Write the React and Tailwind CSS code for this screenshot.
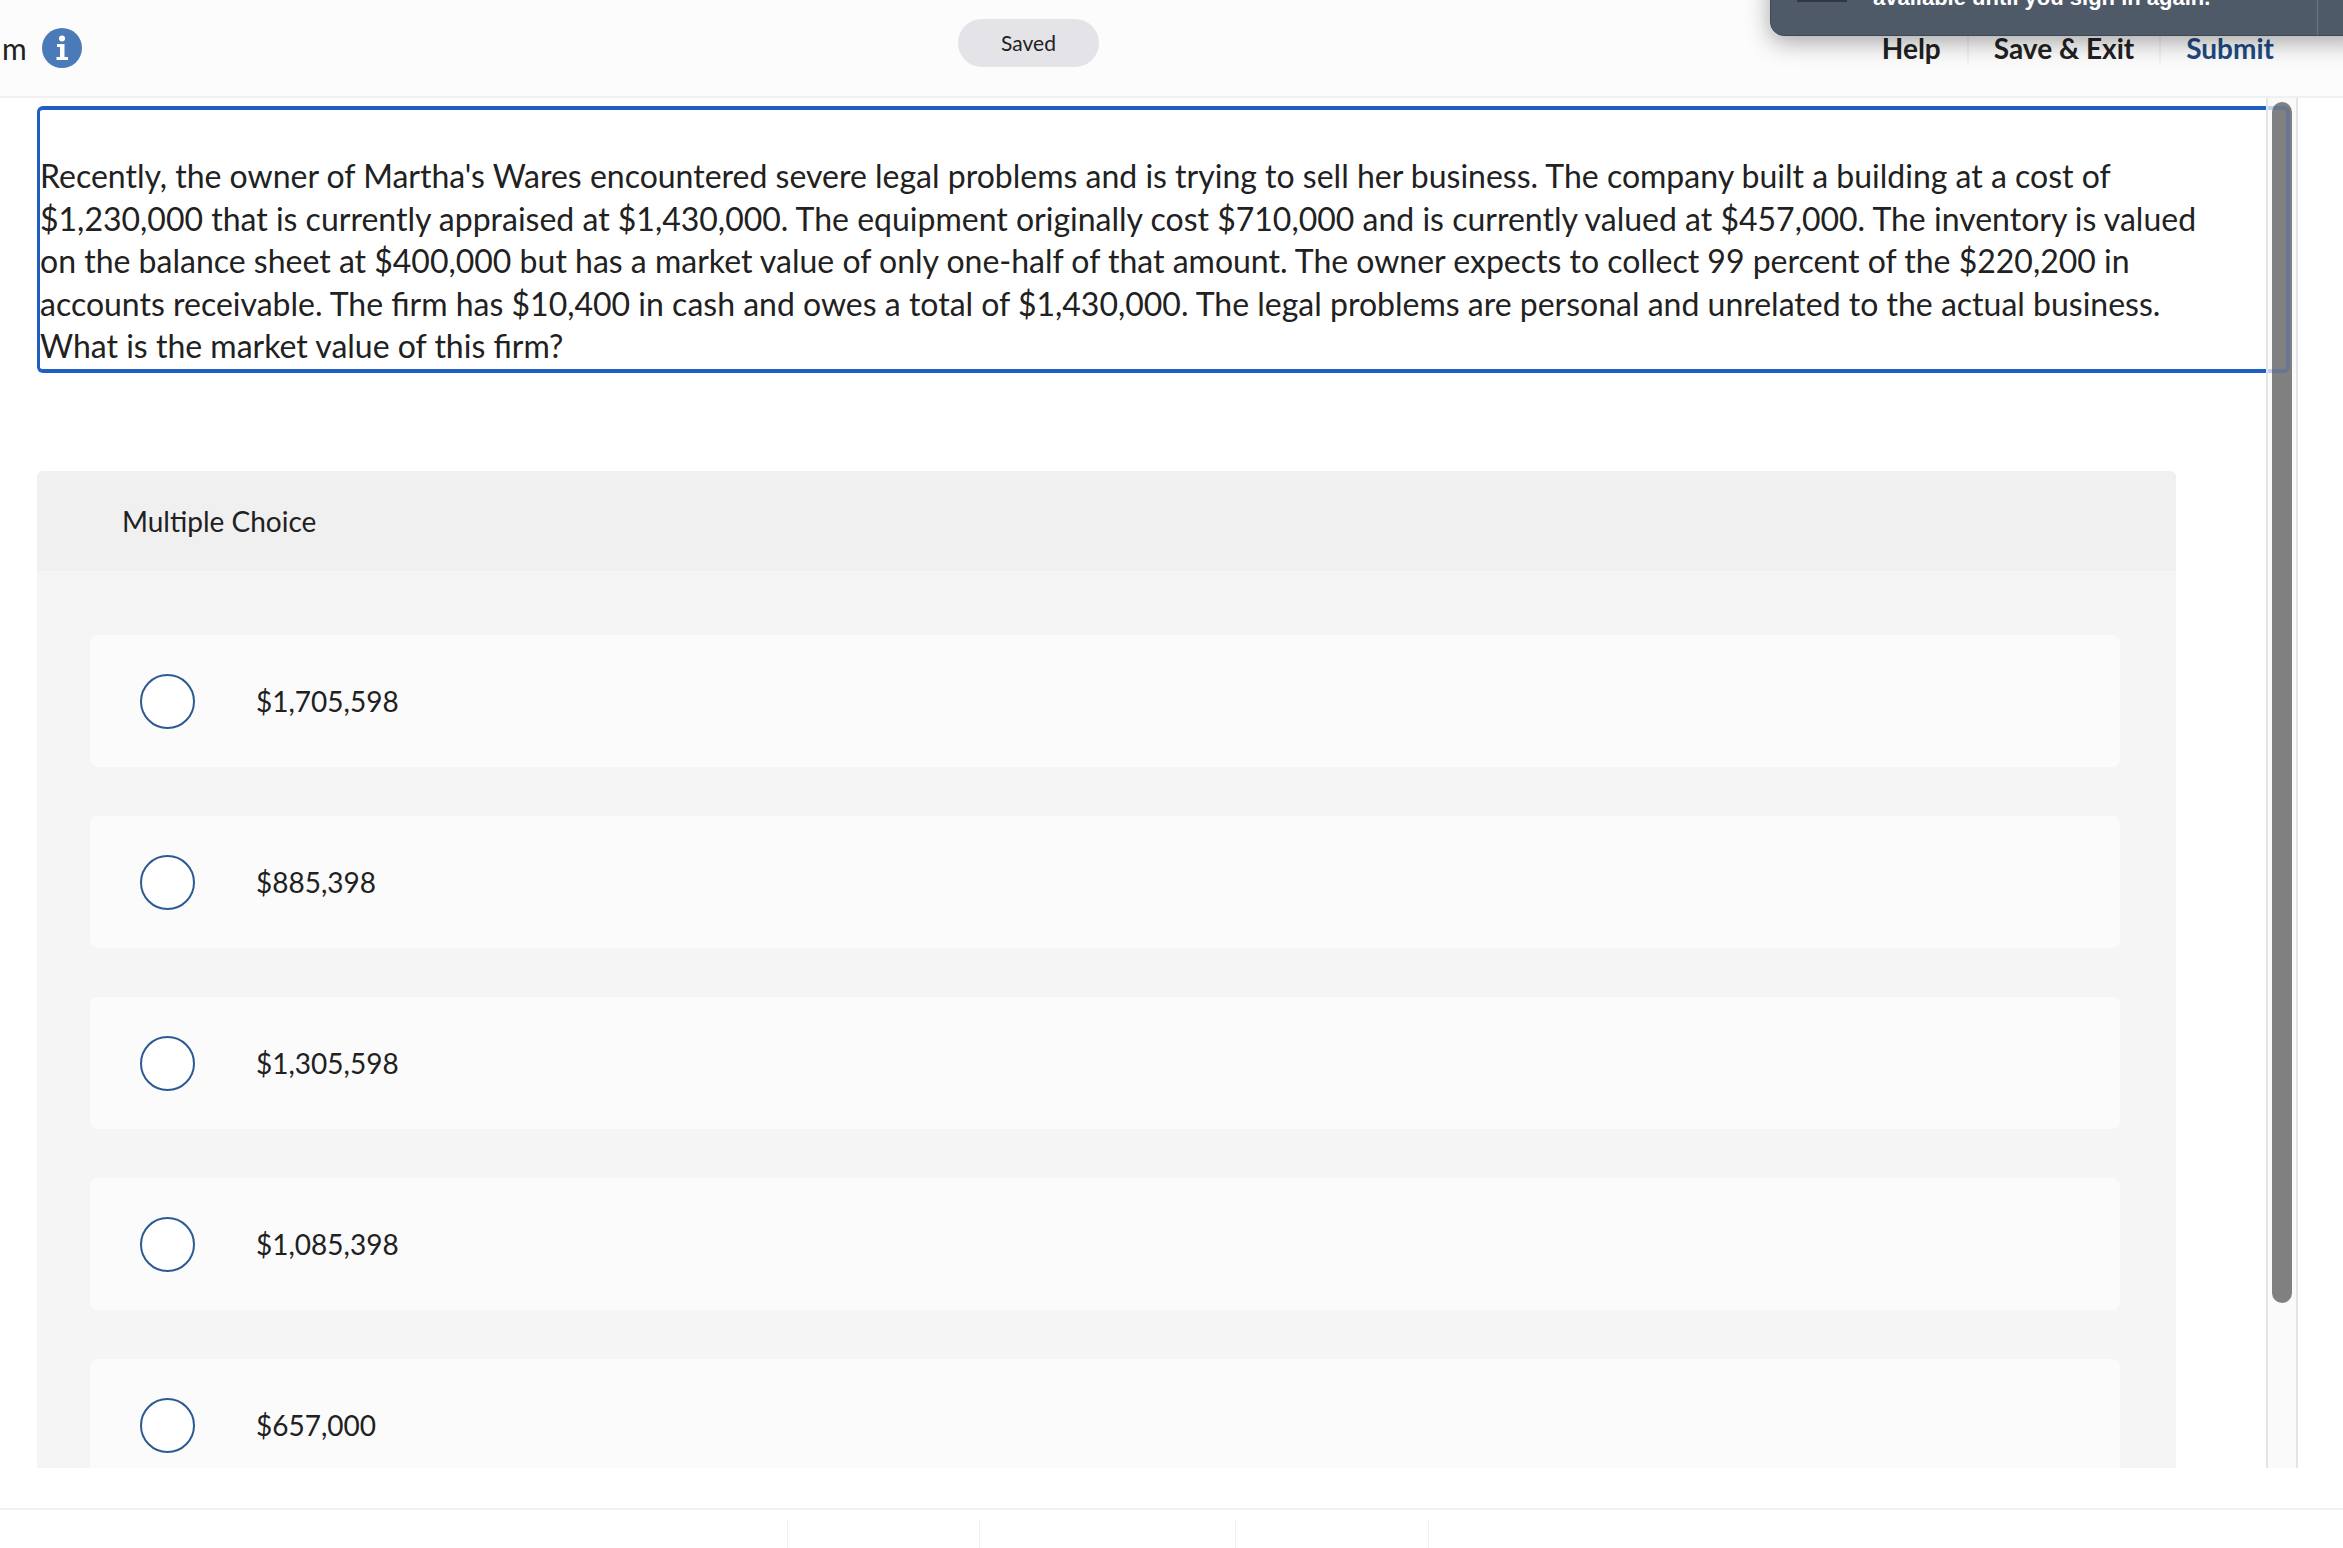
const lines = [
  "Recently, the owner of Martha's Wares encountered severe legal problems and is trying to sell her business. The company built a building at a cost of",
  "$1,230,000 that is currently appraised at $1,430,000. The equipment originally cost $710,000 and is currently valued at $457,000. The inventory is valued",
  "on the balance sheet at $400,000 but has a market value of only one-half of that amount. The owner expects to collect 99 percent of the $220,200 in",
  "accounts receivable. The firm has $10,400 in cash and owes a total of $1,430,000. The legal problems are personal and unrelated to the actual business.",
  "What is the market value of this firm?",
];

const choices = ["$1,705,598", "$885,398", "$1,305,598", "$1,085,398", "$657,000"];

const InfoIcon = () => (
  <svg width="40" height="40" viewBox="0 0 40 40" className="ml-[15px]">
    <circle cx="20" cy="20" r="20" fill="#4a7ab8" />
    <circle cx="20" cy="10.5" r="3" fill="#fff" />
    <path d="M15 16h7.5v13H26v3H14.5v-3H18v-10h-3z" fill="#fff" />
  </svg>
);

export default function App() {
  return (
    <div className="relative flex h-[1548px] w-[2343px] flex-col overflow-hidden bg-white font-['Lato','Open_Sans',sans-serif] text-[#212121]">
      {/* Top bar */}
      <header className="flex h-[98px] shrink-0 items-center border-b-2 border-[#f0f0f0] bg-[#fcfcfc]">
        <div className="flex w-[958px] items-center pl-[2px]">
          <span className="text-[30px] leading-none">m</span>
          <InfoIcon />
        </div>
        <div className="flex h-[48px] w-[141px] -translate-y-[5px] items-center justify-center rounded-full bg-[#e4e3e7] text-[21px]">
          Saved
        </div>
        <nav className="ml-auto flex items-center pr-[69px] text-[28px] font-bold leading-none">
          <a className="flex h-[30px] items-center border-r-2 border-[#f0f0f0] pr-[26px]">Help</a>
          <a className="flex h-[30px] items-center border-r-2 border-[#f0f0f0] px-[25px]">Save &amp; Exit</a>
          <a className="flex h-[30px] items-center pl-[25px] text-[#1f4a82]">Submit</a>
        </nav>
      </header>

      {/* Session toast, cut off by the top of the window */}
      <div className="absolute -top-[30px] left-[1770px] h-[66px] w-[600px] rounded-[14px] border border-[#3f4956] bg-[#4f5a69] shadow-[0_6px_24px_rgba(0,0,0,0.35)]">
        <div className="absolute left-[26px] top-[28px] h-[3px] w-[50px] bg-[#2f3743]" />
        <div className="absolute left-[546px] top-0 h-full w-px bg-[#6b7584]" />
        <p className="absolute left-[102px] top-[16px] font-['Liberation_Sans',sans-serif] text-[22px] font-bold leading-none whitespace-nowrap text-white">
          available until you sign in again.
        </p>
      </div>

      <main className="flex h-[1370px] shrink-0 overflow-hidden">
        <div className="w-[2266px] shrink-0 pl-[37px] pt-[8px]">
          <section className="flex h-[267px] flex-col justify-end rounded-l-[6px] border-y-4 border-l-[3px] border-[#1f5fc4] pb-[1px] text-[32px] leading-[42.6px]">
            {lines.map((line) => (
              <p key={line} className="whitespace-nowrap">{line}</p>
            ))}
          </section>

          <section className="mt-[98px] w-[2139px] rounded-t-[6px] bg-[#f5f5f5]">
            <div className="flex h-[100px] items-center rounded-t-[6px] bg-[#f0f0f0] pl-[85px] text-[28px]">
              Multiple Choice
            </div>
            <div className="flex flex-col gap-[49px] pl-[53px] pr-[56px] pt-[64px]">
              {choices.map((choice) => (
                <label key={choice} className="flex h-[132px] shrink-0 items-center rounded-[8px] bg-[#fbfbfb] pl-[50px]">
                  <span className="h-[55px] w-[55px] shrink-0 rounded-full border-2 border-[#2c5a92] bg-white" />
                  <span className="ml-[61px] text-[28px]">{choice}</span>
                </label>
              ))}
            </div>
          </section>
        </div>

        {/* Scrollbar */}
        <div className="relative h-full w-[32px] shrink-0 border-x-2 border-x-[#e4e4e4] bg-[#fafafa] px-[4px] pt-[4px]">
          <div className="h-[1201px] rounded-full bg-[#808080]" />
          <div className="absolute left-0 top-[8px] h-[267px] w-[22px] rounded-r-[6px] border-y-4 border-r-4 border-[#1f5fc4] opacity-25" />
        </div>
      </main>

      {/* Bottom bar */}
      <footer className="mt-[40px] flex flex-1 border-t-2 border-[#f0f0f0] pl-[787px] pt-[10px]">
        <div className="h-full w-[193px] border-x border-[#f0f0f0]" />
        <div className="h-full w-[256px] border-r border-[#f0f0f0]" />
        <div className="h-full w-[193px] border-r border-[#f0f0f0]" />
      </footer>
    </div>
  );
}
